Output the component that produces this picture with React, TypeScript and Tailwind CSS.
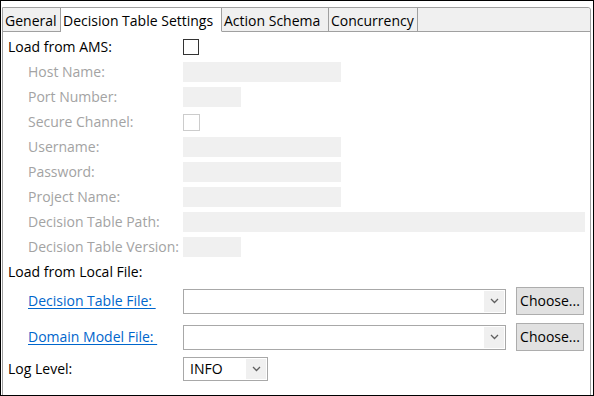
import React from "react";

const Chevron = () => (
  <svg width="9" height="6" viewBox="0 0 9 6" className="block">
    <polyline points="1,1 4.5,4.5 8,1" fill="none" stroke="#606060" strokeWidth="1.3" />
  </svg>
);

const Field = ({ w }: { w: string }) => <div className={`${w} h-[20px] bg-[#f0f0f0]`} />;

function DisabledRow({ label, children }: { label: string; children: React.ReactNode }) {
  return (
    <div className="mt-[5px] flex h-[20px] items-center">
      <div className="w-[175px] pl-[20px] text-[#a3a3a3] whitespace-nowrap">{label}</div>
      {children}
    </div>
  );
}

export default function App() {
  const tabs = [
    { label: "General", w: "w-[58px]" },
    { label: "Decision Table Settings", w: "w-[161px]", active: true },
    { label: "Action Schema", w: "w-[107px]" },
    { label: "Concurrency", w: "w-[89px]" },
  ];
  return (
    <div
      className="w-[594px] h-[396px] border border-black bg-white pt-[6px] pl-[1px] pr-[2px] overflow-hidden text-[14px] leading-[20px] text-black"
      style={{ fontFamily: '"Open Sans", "Noto Sans", sans-serif' }}
    >
      <div className="h-[400px] border border-[#a0a0a0] rounded-tr-[3px] flex flex-col">
        <div className="flex h-[24px] bg-[#f0f0f0] rounded-tr-[3px]">
          {tabs.map((t) => (
            <div
              key={t.label}
              className={`${t.w} h-[24px] border-r border-[#a0a0a0] pl-[2px] pt-[2px] leading-[21px] whitespace-nowrap ${
                t.active ? "bg-white border-b border-b-white" : "border-b border-b-[#a0a0a0]"
              }`}
            >
              {t.label}
            </div>
          ))}
          <div className="flex-1 border-b border-[#a0a0a0]" />
        </div>

        <div className="pl-[5px] pt-[5px] flex flex-col">
          <div className="flex h-[20px] items-center">
            <div className="w-[175px]">Load from AMS:</div>
            <div className="w-[16px] h-[16px] border border-[#333333] bg-white" />
          </div>
          <DisabledRow label="Host Name:"><Field w="w-[158px]" /></DisabledRow>
          <DisabledRow label="Port Number:"><Field w="w-[58px]" /></DisabledRow>
          <DisabledRow label="Secure Channel:">
            <div className="w-[17px] h-[17px] border border-[#cccccc] bg-white" />
          </DisabledRow>
          <DisabledRow label="Username:"><Field w="w-[158px]" /></DisabledRow>
          <DisabledRow label="Password:"><Field w="w-[158px]" /></DisabledRow>
          <DisabledRow label="Project Name:"><Field w="w-[158px]" /></DisabledRow>
          <DisabledRow label="Decision Table Path:"><Field w="w-[402px]" /></DisabledRow>
          <DisabledRow label="Decision Table Version:"><Field w="w-[58px]" /></DisabledRow>

          <div className="mt-[5px] flex h-[20px] items-center">Load from Local File:</div>

          {[
            { label: "Decision Table File:", mt: "mt-[5px]" },
            { label: "Domain Model File:", mt: "mt-[8px]" },
          ].map((r) => (
            <div key={r.label} className={`${r.mt} flex h-[28px] items-center`}>
              <div className="w-[175px] pl-[20px]">
                <span className="text-[#0066cc] underline underline-offset-[2px] whitespace-pre">{r.label + " "}</span>
              </div>
              <div className="w-[323px] h-[25px] border border-[#a8a8a8] bg-white flex justify-end p-[1px]">
                <div className="w-[20px] h-full bg-[#f0f0f0] flex items-center justify-center">
                  <Chevron />
                </div>
              </div>
              <div className="ml-[10px] w-[68px] h-[28px] border border-[#adadad] bg-[#e1e1e1] flex items-center justify-center">
                Choose...
              </div>
            </div>
          ))}

          <div className="mt-[6px] flex h-[24px] items-center">
            <div className="w-[175px]">Log Level:</div>
            <div className="w-[85px] h-[24px] border border-[#a8a8a8] bg-white flex items-center p-[1px]">
              <div className="flex-1 pl-[5px]">INFO</div>
              <div className="w-[20px] h-full bg-[#f0f0f0] flex items-center justify-center">
                <Chevron />
              </div>
            </div>
          </div>
        </div>
      </div>
    </div>
  );
}
